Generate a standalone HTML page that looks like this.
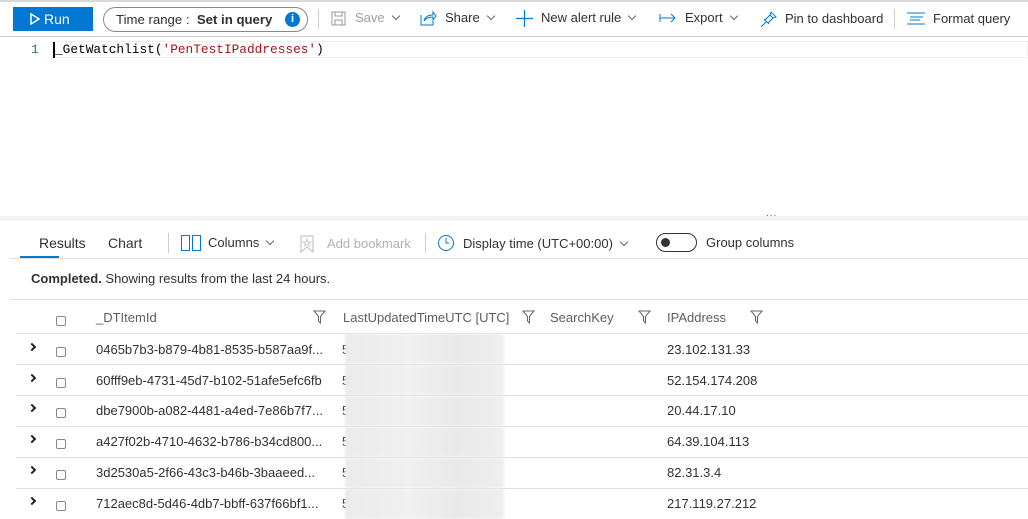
<!DOCTYPE html>
<html><head><meta charset="utf-8"><style>
*{margin:0;padding:0;box-sizing:border-box}
body{width:1028px;height:519px;overflow:hidden;background:#fff;font-family:"Liberation Sans",sans-serif;font-size:13px;color:#323130;position:relative}
.a{position:absolute;white-space:nowrap}
.ln{position:absolute;background:#e1dfdd}
.cb{position:absolute;width:10px;height:10px;border:1px solid #8a8886;border-radius:2px}
.chev{position:absolute;width:6px;height:6px;border-right:2px solid #222;border-bottom:2px solid #222;transform:rotate(-45deg)}
.dd{display:inline-block;width:6px;height:6px;border-right:1px solid #666;border-bottom:1px solid #666;transform:rotate(45deg);margin-left:8px;position:relative;top:-3px}
.blur{position:absolute;left:345px;width:159px;height:30px;background:linear-gradient(90deg,#ebebeb,#f0f0f0 40%,#e9e9e9 70%,#eeeeee);filter:blur(1px)}
</style></head><body>
<div class="ln" style="left:0;top:0;width:1028px;height:2px;background:#d8d8d8"></div>
<div class="ln" style="left:0;top:36px;width:1028px;height:1px;background:#d0d0d0"></div>
<div class="a" style="left:13px;top:7px;width:80px;height:24px;background:#0078d4;color:#fff;font-size:14px;line-height:24px;padding-left:17px">
<svg style="position:absolute;left:17px;top:6px" width="10" height="12" viewBox="0 0 10 12"><path d="M1 1L9 6L1 11Z" fill="none" stroke="#fff" stroke-width="1.5"/></svg><span style="margin-left:14px">Run</span></div>
<div class="a" style="left:103px;top:7px;width:205px;height:25px;border:1px solid #8a8886;border-radius:13px;font-size:13.2px;line-height:23px;padding-left:12px">Time range :&nbsp; <b style="font-weight:600">Set in query</b>
<span style="position:absolute;left:181px;top:4px;width:15px;height:15px;border-radius:50%;background:#0078d4;color:#fff;font-size:11px;font-weight:bold;line-height:15px;text-align:center">i</span></div>
<div class="ln" style="left:318px;top:9px;width:1px;height:20px;background:#ccc"></div>
<svg class="a" style="left:331px;top:11px" width="15" height="15" viewBox="0 0 15 15"><rect x="1" y="1" width="13" height="13" fill="none" stroke="#999"/><rect x="4" y="1" width="7" height="4" fill="none" stroke="#999"/><rect x="4" y="9" width="7" height="5" fill="none" stroke="#999"/></svg>
<div class="a" style="left:355px;top:10px;color:#a19f9d">Save<span class="dd"></span></div>
<svg class="a" style="left:420px;top:10px" width="17" height="16" viewBox="0 0 17 16"><path d="M1 5V15H13V11" fill="none" stroke="#0078d4"/><path d="M4 11C5 6 9 5 13 5V2L16 6L13 10V7C9 7 6 8 4 11Z" fill="none" stroke="#0078d4"/></svg>
<div class="a" style="left:445px;top:10px">Share<span class="dd"></span></div>
<svg class="a" style="left:516px;top:10px" width="17" height="17"><path d="M8.5 0V17M0 8.5H17" stroke="#0078d4" stroke-width="1.2"/></svg>
<div class="a" style="left:541px;top:10px">New alert rule<span class="dd"></span></div>
<svg class="a" style="left:659px;top:13px" width="18" height="10"><path d="M1 1V9M1 5H16M12 1L16 5L12 9" fill="none" stroke="#0078d4"/></svg>
<div class="a" style="left:685px;top:10px">Export<span class="dd"></span></div>
<svg class="a" style="left:760px;top:11px" width="17" height="17" viewBox="0 0 17 17"><path d="M1 16L6 11M4 8L9 13M5 9L10 4L13 7L8 12M10 4L11 1L16 6L13 7" fill="none" stroke="#0078d4"/></svg>
<div class="a" style="left:785px;top:11px">Pin to dashboard</div>
<div class="ln" style="left:894px;top:9px;width:1px;height:20px;background:#ccc"></div>
<svg class="a" style="left:907px;top:12px" width="18" height="13"><path d="M0 1H18M3 5H16M3 8H13M0 12H18" stroke="#0078d4"/></svg>
<div class="a" style="left:933px;top:11px">Format query</div>

<div class="a" style="left:31px;top:42px;font-family:'Liberation Mono',monospace;font-size:13px;color:#237893">1</div>
<div class="a" style="left:52px;top:41px;width:976px;height:17px;border:1px solid #eee;border-left:none"></div>
<div class="a" style="left:53px;top:42px;width:2px;height:16px;background:#000"></div>
<div class="a" style="left:55px;top:42px;font-family:'Liberation Mono',monospace;font-size:12.8px;color:#000">_GetWatchlist(<span style="color:#a31515">'PenTestIPaddresses'</span>)</div>

<div class="a" style="left:0;top:216px;width:1028px;height:5px;background:#f3f3f3"></div>
<div class="a" style="left:766px;top:208px;font-size:10px;color:#666;letter-spacing:1px">...</div>

<div class="a" style="left:39px;top:235px;font-size:14px">Results</div>
<div class="a" style="left:20px;top:256px;width:39px;height:3px;background:#0078d4"></div>
<div class="a" style="left:108px;top:235px;font-size:14px">Chart</div>
<div class="ln" style="left:168px;top:233px;width:1px;height:20px;background:#ccc"></div>
<svg class="a" style="left:181px;top:235px" width="20" height="16"><rect x="0.5" y="0.5" width="8" height="15" fill="none" stroke="#0078d4"/><rect x="11.5" y="0.5" width="8" height="15" fill="none" stroke="#0078d4"/></svg>
<div class="a" style="left:208px;top:235px">Columns<span class="dd"></span></div>
<svg class="a" style="left:300px;top:235px" width="14" height="18"><path d="M1 1H13V17L7 12L1 17Z" fill="none" stroke="#bbb"/><path d="M7 4L8 7H11L8.5 8.5L9.5 11L7 9.5L4.5 11L5.5 8.5L3 7H6Z" fill="none" stroke="#bbb" stroke-width=".7"/></svg>
<div class="a" style="left:327px;top:236px;color:#b3b0ad">Add bookmark</div>
<div class="ln" style="left:425px;top:233px;width:1px;height:20px;background:#ccc"></div>
<svg class="a" style="left:437px;top:234px" width="18" height="18"><circle cx="9" cy="9" r="7.5" fill="none" stroke="#0078d4"/><path d="M9 4V9H12" fill="none" stroke="#0078d4"/></svg>
<div class="a" style="left:463px;top:236px">Display time (UTC+00:00)<span class="dd"></span></div>
<div class="a" style="left:656px;top:233px;width:41px;height:19px;border:1px solid #333;border-radius:10px"><div style="position:absolute;left:4px;top:4px;width:9px;height:9px;border-radius:50%;background:#333"></div></div>
<div class="a" style="left:706px;top:235px">Group columns</div>
<div class="ln" style="left:10px;top:258px;width:1018px;height:1px"></div>

<div class="a" style="left:31px;top:271px"><b style="font-weight:600">Completed.</b> Showing results from the last 24 hours.</div>
<div class="ln" style="left:10px;top:299px;width:1018px;height:1px"></div>

<div class="cb" style="left:56px;top:316px"></div>
<div class="a" style="left:96px;top:310px;color:#605e5c">_DTItemId</div>
<svg class="a" style="left:313px;top:310px" width="13" height="14"><path d="M1 1H12L7.5 6.5V13L5.5 11V6.5Z" fill="none" stroke="#666"/></svg>
<div class="a" style="left:343px;top:310px;color:#605e5c">LastUpdatedTimeUTC [UTC]</div>
<svg class="a" style="left:522px;top:310px" width="13" height="14"><path d="M1 1H12L7.5 6.5V13L5.5 11V6.5Z" fill="none" stroke="#666"/></svg>
<div class="a" style="left:550px;top:310px;color:#605e5c">SearchKey</div>
<svg class="a" style="left:638px;top:310px" width="13" height="14"><path d="M1 1H12L7.5 6.5V13L5.5 11V6.5Z" fill="none" stroke="#666"/></svg>
<div class="a" style="left:667px;top:310px;color:#605e5c">IPAddress</div>
<svg class="a" style="left:750px;top:310px" width="13" height="14"><path d="M1 1H12L7.5 6.5V13L5.5 11V6.5Z" fill="none" stroke="#666"/></svg>
<div class="ln" style="left:16px;top:333px;width:1012px;height:1px"></div>

<div class="chev" style="left:29px;top:344px"></div><div class="cb" style="left:56px;top:347px"></div><div class="a" style="left:96px;top:342px">0465b7b3-b879-4b81-8535-b587aa9f...</div><div class="a" style="left:342px;top:342px">5</div><div class="blur" style="top:334px"></div><div class="a" style="left:667px;top:342px">23.102.131.33</div><div class="ln" style="left:16px;top:364px;width:1012px;height:1px"></div>
<div class="chev" style="left:29px;top:375px"></div><div class="cb" style="left:56px;top:378px"></div><div class="a" style="left:96px;top:373px">60fff9eb-4731-45d7-b102-51afe5efc6fb</div><div class="a" style="left:342px;top:373px">5</div><div class="blur" style="top:365px"></div><div class="a" style="left:667px;top:373px">52.154.174.208</div><div class="ln" style="left:16px;top:395px;width:1012px;height:1px"></div>
<div class="chev" style="left:29px;top:405px"></div><div class="cb" style="left:56px;top:408px"></div><div class="a" style="left:96px;top:403px">dbe7900b-a082-4481-a4ed-7e86b7f7...</div><div class="a" style="left:342px;top:403px">5</div><div class="blur" style="top:396px"></div><div class="a" style="left:667px;top:403px">20.44.17.10</div><div class="ln" style="left:16px;top:426px;width:1012px;height:1px"></div>
<div class="chev" style="left:29px;top:436px"></div><div class="cb" style="left:56px;top:439px"></div><div class="a" style="left:96px;top:434px">a427f02b-4710-4632-b786-b34cd800...</div><div class="a" style="left:342px;top:434px">5</div><div class="blur" style="top:427px"></div><div class="a" style="left:667px;top:434px">64.39.104.113</div><div class="ln" style="left:16px;top:457px;width:1012px;height:1px"></div>
<div class="chev" style="left:29px;top:467px"></div><div class="cb" style="left:56px;top:470px"></div><div class="a" style="left:96px;top:465px">3d2530a5-2f66-43c3-b46b-3baaeed...</div><div class="a" style="left:342px;top:465px">5</div><div class="blur" style="top:458px"></div><div class="a" style="left:667px;top:465px">82.31.3.4</div><div class="ln" style="left:16px;top:488px;width:1012px;height:1px"></div>
<div class="chev" style="left:29px;top:498px"></div><div class="cb" style="left:56px;top:501px"></div><div class="a" style="left:96px;top:496px">712aec8d-5d46-4db7-bbff-637f66bf1...</div><div class="a" style="left:342px;top:496px">5</div><div class="blur" style="top:489px"></div><div class="a" style="left:667px;top:496px">217.119.27.212</div>
</body></html>
